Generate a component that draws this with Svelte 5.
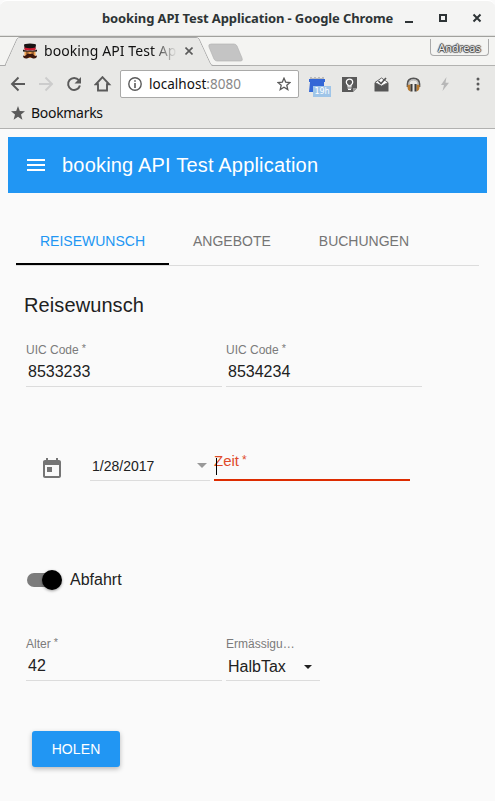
<script>
  const tabs = ['REISEWUNSCH', 'ANGEBOTE', 'BUCHUNGEN'];
  let active = $state(0);
  let departure = $state(true);
</script>

{#snippet field(label, value)}
  <div class="field">
    <span class="label">{label}<sup>*</sup></span>
    <span class="value">{value}</span>
  </div>
{/snippet}

<div class="window">
  <header class="titlebar">
    <span class="title">booking API Test Application - Google Chrome</span>
    <svg class="controls" width="80" height="14" viewBox="0 0 80 14">
      <path d="M1 12h8" stroke="#2e3436" stroke-width="2" />
      <rect x="36" y="5" width="6" height="6" fill="none" stroke="#2e3436" stroke-width="2" />
      <path d="M69.500 4.500l7 7m0-7l-7 7" stroke="#2e3436" stroke-width="2" />
    </svg>
  </header>

  <div class="tabstrip">
    <svg class="shape" width="250" height="29" viewBox="0 0 250 29">
      <path d="M0 28.500H5L17 2Q18 .5 20 .5H196Q198 .5 199 2L210 26Q211 28.500 213 28.500H250" fill="none" stroke="#aaa" />
      <path d="M5.500 29L17.500 2Q18 1 20 1H196Q198 1 198.500 2L210 27L212 29Z" fill="#e8e8e6" />
      <path d="M212 7H234Q236 7 237 9L242 21Q243 24 241 24H217Q215 24 214 22L209 10Q208 7 211 7Z" fill="#c4c4c4" stroke="#b4b4b4" stroke-width=".7" />
    </svg>
    <svg class="favicon" width="16" height="16" viewBox="0 0 16 16">
      <path d="M2 2Q2 .5 8 .5Q14 .5 14 2L13.300 6H2.700Z" fill="#171313" />
      <path d="M2.500 4.500Q8 6 13.500 4.500V7.500H2.500Z" fill="#ce1c32" />
      <path d="M1 6.500Q2 8 8 7.500Q14 8 15 6.500V8.500Q8 9.500 1 8.500Z" fill="#171313" />
      <path d="M2.500 8.700H13.500V15H2.500Z" fill="#efa050" />
      <path d="M4 9.500h2.500v1H4zM9.500 9.500H12v1H9.500z" fill="#51240f" />
      <path d="M8 11Q5 10 4 12Q3 13.500 1 12.500Q1 16 5 15.500L8 14L11 15.500Q15 16 15 12.500Q13 13.500 12 12Q11 10 8 11Z" fill="#3c170e" />
    </svg>
    <span class="tabtitle">booking API Test App</span>
    <svg class="close" width="8" height="8" viewBox="0 0 8 8"><path d="M.5.5l7 7m0-7l-7 7" stroke="#5a5a5a" stroke-width="1.600" /></svg>
    <span class="profile">Andreas</span>
  </div>

  <div class="navbar">
    <div class="navicons">
      <svg width="16" height="16" viewBox="0 0 16 16"><path d="M15 8H2M8.500 1.500L2 8l6.500 6.500" fill="none" stroke="#5a5a5a" stroke-width="1.900" /></svg>
      <svg width="16" height="16" viewBox="0 0 16 16"><path d="M1 8h13M7.500 1.500L14 8l-6.500 6.500" fill="none" stroke="#ccc" stroke-width="1.900" /></svg>
      <svg width="16" height="16" viewBox="0 0 16 16"><path d="M12.800 4.200A6 6 0 1 0 13.900 9.500" fill="none" stroke="#5a5a5a" stroke-width="2" /><path d="M15 1v6.500H8.500Z" fill="#5a5a5a" /></svg>
      <svg width="18" height="16" viewBox="0 0 18 16"><path d="M8.500 1.200L1.800 8.300H4V14.500H13V8.300H15.200Z" fill="none" stroke="#5a5a5a" stroke-width="1.900" /></svg>
    </div>
    <div class="address">
      <svg width="14" height="14" viewBox="0 0 14 14"><circle cx="7" cy="7" r="6.200" fill="none" stroke="#5a5a5a" stroke-width="1.400" /><path d="M7 6v5M7 3.200v1.600" stroke="#5a5a5a" stroke-width="1.600" /></svg>
      <span class="url">localhost<i>:8080</i></span>
      <svg width="14" height="14" viewBox="0 0 14 14"><path d="M7 1.200L8.700 5.100L13 5.500L9.800 8.300L10.800 12.600L7 10.300L3.200 12.600L4.200 8.300L1 5.500L5.300 5.100Z" fill="none" stroke="#5a5a5a" stroke-width="1.300" /></svg>
    </div>
    <div class="extensions">
      <span class="calendar">
        <svg width="16" height="16" viewBox="0 0 16 16"><path d="M1 1h2v1h2V1h2v1h2V1h2v1h2V1h2v3H1Z" fill="#bbb" /><path d="M0 3H16V6H15V16H0L1 6H0Z" fill="#3367d6" /></svg>
        <b>19h</b>
      </span>
      <svg width="15" height="15" viewBox="0 0 15 15"><path d="M0 0H15V11L11 15H0Z" fill="#595959" /><path d="M11 15V11H15Z" fill="#999" /><path d="M6 9V8Q4.300 7 4.300 5.300A3.200 3.200 0 0 1 10.700 5.300Q10.700 7 9 8V9Z" fill="none" stroke="#fff" stroke-width="1.300" /><path d="M5.500 11h4M6 12.500h3" stroke="#fff" /></svg>
      <svg width="15" height="15" viewBox="0 0 15 15"><path d="M.5 6L3 3.800V6L7.500 9L14.500 5.500V14Q14.500 14.500 14 14.500H1Q.5 14.500.5 14Z" fill="#565656" /><path d="M1 5.500L7.500 1L14 5.500L7.500 9Z" fill="#fff" stroke="#656565" /><path d="M4.500 4L7 6.500L12 1" fill="none" stroke="#555" stroke-width="1.600" /></svg>
      <svg width="15" height="15" viewBox="0 0 15 15"><path d="M1.500 10V7Q1.500 1.300 7.500 1.300Q13.500 1.300 13.500 7V10" fill="none" stroke="#555" stroke-width="1.700" /><path d="M3 9V7Q3 3 7.500 3Q12 3 12 7V9" fill="none" stroke="#aaa" stroke-width="1" /><path d="M1.500 8L4.500 7.500V14.500Q1.500 13.500 1.500 10ZM13.500 8L10.500 7.500V14.500Q13.500 13.500 13.500 10Z" fill="#b7792e" /><path d="M4.500 7H6.500V14.500H4.500ZM8.500 7H10.500V14.500H8.500Z" fill="#3d3d3d" /></svg>
      <svg class="bolt" width="10" height="14" viewBox="0 0 10 14"><path d="M6.500 0L1 8H4L2.500 14L9 5.700H5.500Z" fill="#b7b7b7" /></svg>
      <svg class="more" width="4" height="14" viewBox="0 0 4 14"><circle cx="2" cy="2" r="1.500" fill="#5a5a5a" /><circle cx="2" cy="7" r="1.500" fill="#5a5a5a" /><circle cx="2" cy="12" r="1.500" fill="#5a5a5a" /></svg>
    </div>
  </div>

  <div class="bookmarks">
    <svg width="14" height="14" viewBox="0 0 14 14"><path d="M7 0L8.800 4.900L14 5.200L10 8.500L11.400 13.700L7 10.800L2.600 13.700L4 8.500L0 5.200L5.200 4.900Z" fill="#5a5a5a" /></svg>
    <span>Bookmarks</span>
  </div>

  <main>
    <div class="appbar">
      <svg width="24" height="24" viewBox="0 0 24 24"><path d="M3 18h18v-2H3v2zm0-5h18v-2H3v2zm0-7v2h18V6H3z" fill="#fff" /></svg>
      <span>booking API Test Application</span>
    </div>

    <nav>
      {#each tabs as tab, i}
        <button class:active={active === i} onclick={() => (active = i)}>{tab}</button>
      {/each}
    </nav>

    <section>
      <h2>Reisewunsch</h2>
      <div class="row codes">
        {@render field('UIC Code', '8533233')}
        {@render field('UIC Code', '8534234')}
      </div>

      <div class="row when">
        <svg width="24" height="24" viewBox="0 0 24 24"><path d="M19 3h-1V1h-2v2H8V1H6v2H5c-1.110 0-1.990.9-1.990 2L3 19c0 1.100.89 2 2 2h14c1.100 0 2-.9 2-2V5c0-1.100-.9-2-2-2zm0 16H5V8h14v11zM7 10h5v5H7z" fill="#757575" /></svg>
        <div class="date"><span>1/28/2017</span><i class="triangle"></i></div>
        <div class="time"><span class="timelabel">Zeit<sup>*</sup></span><i class="caret"></i></div>
      </div>

      <button class="switch" onclick={() => (departure = !departure)}>
        <span class="track" class:on={departure}><i></i></span>
        <span>Abfahrt</span>
      </button>

      <div class="row person">
        {@render field('Alter', '42')}
        <div class="field select">
          <span class="label">Ermässigu…</span>
          <span class="value">HalbTax<i class="arrow"></i></span>
        </div>
      </div>

      <button class="submit">HOLEN</button>
    </section>
  </main>
</div>

<style>
  :global(body) { background: #fafafa; overflow: hidden; }
  * { box-sizing: border-box; }
  svg { display: block; flex: none; }
  button { border: 0; background: none; padding: 0; font: inherit; color: inherit; }
  i { font-style: normal; }
  .window { width: 495px; height: 801px; overflow: hidden; background: #fafafa; font-family: "Liberation Sans", Arial, sans-serif; color: #212121; }
  .titlebar { height: 37px; display: flex; align-items: center; padding-left: 102px; background: #f4f4f3; border-top: 1px solid #fff; border-bottom: 1px solid #a1a19d; box-shadow: inset 0 -1px #e1e1df; border-radius: 7px 7px 0 0; font: 700 13px/20px "Noto Sans", sans-serif; letter-spacing: -.12px; color: #2e3436; }
  .title { width: 292px; white-space: nowrap; margin-top: -1px; }
  .controls { margin: -3px 0 0 10px; }
  .tabstrip { height: 29px; display: flex; align-items: center; position: relative; background: #f4f4f2; border-bottom: 1px solid #b2b2b0; font-family: "Noto Sans", sans-serif; }
  .shape { position: absolute; left: 0; top: 0; }
  .favicon { margin-left: 22px; position: relative; }
  .tabtitle { position: relative; width: 133px; margin-left: 6px; white-space: nowrap; font-size: 14px; line-height: 20px; letter-spacing: .08px; color: #111; -webkit-mask-image: linear-gradient(90deg, #000 108px, transparent); mask-image: linear-gradient(90deg, #000 108px, transparent); }
  .close { position: relative; margin-left: 8px; }
  .profile { align-self: flex-start; width: 59px; height: 17px; margin: 2px 6px 0 auto; border: 1px solid #aaa; border-top: 0; border-radius: 0 0 4px 4px; text-align: center; font-size: 11px; line-height: 18px; color: #eee; text-shadow: 0 1px 1px #444, 1px 0 1px #444, -1px 0 1px #444, 0 -1px 1px #444; }
  .navbar { height: 36px; display: flex; align-items: center; background: #e8e8e6; }
  .navicons { width: 120px; padding-left: 10px; display: flex; gap: 12px; }
  .address { width: 179px; height: 28px; display: flex; align-items: center; padding: 0 7px; background: #fff; border: 1px solid #a9a9a8; border-radius: 2px; }
  .url { flex: 1; margin-left: 7px; font: 13.500px/20px "Noto Sans", sans-serif; letter-spacing: .03px; color: #111; }
  .url i { color: #888; }
  .extensions { flex: 1; display: flex; align-items: center; padding-left: 10px; gap: 17px; }
  .calendar { position: relative; width: 16px; }
  .calendar b { position: absolute; left: 4px; top: 10px; width: 18px; height: 11px; background: #9fc5e8; color: #fff; font: 8px/11px "DejaVu Sans", sans-serif; text-align: center; }
  .bolt { margin-left: 2px; }
  .more { margin-left: 9px; }
  .bookmarks { height: 27px; display: flex; align-items: center; gap: 6px; padding: 0 0 5px 11px; background: #e8e8e6; border-bottom: 1px solid #b1b1b0; font: 14px/20px "Noto Sans", sans-serif; letter-spacing: -.3px; color: #111; }
  main { padding: 8px; }
  .appbar { height: 56px; display: flex; align-items: center; gap: 14px; padding-left: 16px; background: #2196f3; color: #fff; font-size: 20px; letter-spacing: .19px; }
  nav { display: flex; height: 49px; margin: 24px 8px 0; border-bottom: 1px solid #dcdcdc; }
  nav button { height: 48px; padding: 0 24px; font-size: 14px; line-height: 48px; color: #757575; }
  nav button.active { color: #2196f3; border-bottom: 2px solid #000; }
  section { padding: 0 18px; }
  h2 { margin: 27px 0 0 -2px; font-size: 20px; line-height: 24px; font-weight: 400; letter-spacing: .1px; }
  .row { display: flex; gap: 4px; }
  .codes { margin-top: 24px; }
  .field { display: flex; flex-direction: column; width: 196px; height: 46px; border-bottom: 1px solid #dcdcdc; }
  .label { font-size: 12px; line-height: 18px; height: 18px; color: #7b7b7b; white-space: nowrap; }
  sup { font-size: .9em; line-height: 0; margin-left: 3px; vertical-align: 2px; }
  .value { margin-top: 1px; padding-left: 2px; font-size: 16px; line-height: 24px; display: flex; align-items: center; }
  .when { align-items: flex-end; margin-top: 64px; height: 30px; }
  .when svg { margin: 0 22px 0 14px; }
  .date { width: 120px; height: 30px; display: flex; align-items: center; justify-content: space-between; padding: 0 3px 0 2px; border-bottom: 1px solid #dcdcdc; font-size: 14px; }
  .triangle { border: 5px solid transparent; border-top-color: #999; border-bottom: 0; margin-top: -1px; }
  .time { position: relative; width: 196px; height: 30px; border-bottom: 2px solid #dd2c00; color: #dd2c00; }
  .timelabel { display: block; font-size: 15px; line-height: 20px; color: #e04b2a; }
  .timelabel sup { font-size: .8em; }
  .caret { position: absolute; left: 2px; top: 7px; width: 1px; height: 17px; background: #000; }
  .switch { display: flex; align-items: center; gap: 9px; height: 24px; margin-top: 87px; font-size: 16px; }
  .track { display: flex; align-items: center; width: 34px; height: 14px; margin-left: 1px; border-radius: 7px; background: #7c7c7c; }
  .track i { flex: none; width: 20px; height: 20px; border-radius: 50%; background: #000; box-shadow: 0 1px 3px #0006; }
  .track.on i { margin-left: 15px; }
  .person { margin-top: 43px; }
  .select { width: 94px; }
  .select .value { justify-content: space-between; padding-right: 8px; padding-top: 1px; }
  .arrow { border: 4px solid transparent; border-top-color: #212121; border-bottom: 0; }
  .submit { display: block; width: 88px; height: 36px; margin: 50px 0 0 6px; border-radius: 3px; background: #2196f3; color: #fff; font-size: 14px; letter-spacing: .1px; box-shadow: 0 2px 5px #0004; }
</style>
